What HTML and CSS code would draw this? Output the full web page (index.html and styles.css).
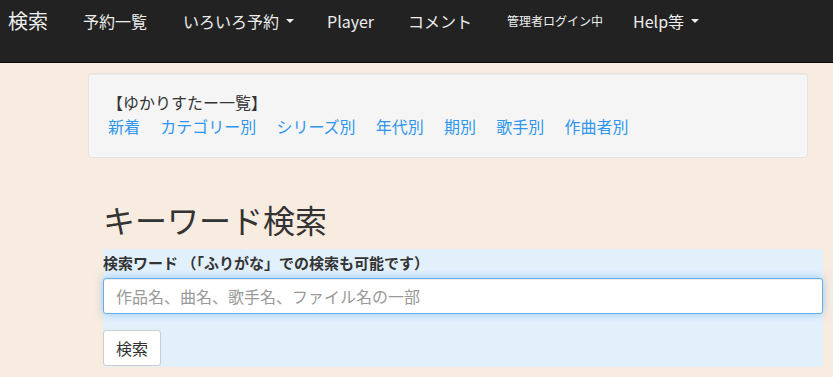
FILE: index.html
```html
<!DOCTYPE html>
<html lang="ja">
<head>
<meta charset="utf-8">
<title>キーワード検索</title>
<link rel="stylesheet" href="styles.css">
</head>
<body>
<header class="navbar">
  <div class="nav-inner">
    <a class="brand" href="#">検索</a>
    <ul class="nav">
      <li><a href="#">予約一覧</a></li>
      <li><a href="#">いろいろ予約<span class="caret"></span></a></li>
      <li><a href="#">Player</a></li>
      <li><a href="#">コメント</a></li>
      <li><a class="small" href="#">管理者ログイン中</a></li>
      <li><a href="#">Help等<span class="caret"></span></a></li>
    </ul>
  </div>
</header>
<main class="main">
  <section class="well">
    <div class="well-title">【ゆかりすたー一覧】</div>
    <div class="well-links">
      <a href="#">新着</a>
      <a href="#">カテゴリー別</a>
      <a href="#">シリーズ別</a>
      <a href="#">年代別</a>
      <a href="#">期別</a>
      <a href="#">歌手別</a>
      <a href="#">作曲者別</a>
    </div>
  </section>
  <h1 class="title">キーワード検索</h1>
  <form class="search-form">
    <label class="label" for="kw">検索ワード （「ふりがな」での検索も可能です）</label>
    <input id="kw" class="input" type="text" placeholder="作品名、曲名、歌手名、ファイル名の一部">
    <div class="actions"><button type="button" class="btn">検索</button></div>
  </form>
</main>
</body>
</html>
```
FILE: styles.css
```css
* { box-sizing: border-box; }
html, body { margin: 0; padding: 0; }
body {
  background: #f8ebe0;
  font-family: "Noto Sans CJK JP", "Noto Sans", sans-serif;
  color: #333;
  font-size: 16px;
  line-height: 24px;
}
a { text-decoration: none; }

.navbar {
  height: 63px;
  background: #222;
  border-bottom: 1px solid #080808;
}
.nav-inner {
  height: 42px;
  display: flex;
  align-items: center;
  padding-left: 8px;
}
.brand {
  color: #eee;
  font-size: 20px;
  line-height: 24px;
}
.nav {
  list-style: none;
  margin: 0 0 0 35px;
  padding: 0;
  display: flex;
  align-items: center;
}
.nav li + li { margin-left: 36px; }
.nav li:nth-child(3) { margin-left: 33px; }
.nav li:nth-child(4) { margin-left: 34px; }
.nav li:nth-child(5) { margin-left: 35px; }
.nav li:nth-child(6) { margin-left: 30px; }
.nav a {
  color: #eee;
  font-size: 16px;
  line-height: 24px;
  display: flex;
  align-items: center;
}
.nav a.small { font-size: 12px; }
.caret {
  display: inline-block;
  width: 0;
  height: 0;
  margin-left: 7px;
  border-top: 4px solid #eee;
  border-left: 4px solid transparent;
  border-right: 4px solid transparent;
}

.main { padding-left: 88px; }
.well {
  width: 720px;
  margin-top: 10px;
  height: 85px;
  padding: 16px 18px 0 19px;
  background: #f5f5f5;
  border: 1px solid #e3e3e3;
  border-radius: 4px;
  box-shadow: inset 0 1px 1px rgba(0,0,0,.05);
}
.well-title { font-size: 16px; line-height: 24px; color: #333; margin-left: -1px; }
.well-links { display: flex; gap: 20.2px; font-size: 16px; line-height: 24px; }
.well-links a { color: #2f95ee; }

.title {
  margin: 43px 0 0 15px;
  font-size: 32px;
  line-height: 36px;
  font-weight: 400;
  color: #333;
}
.search-form {
  margin: 12px 0 0 15px;
  width: 720px;
  background: #e2f0fc;
  padding-top: 4px;
  padding-bottom: 1px;
}
.label {
  display: block;
  font-size: 15px;
  line-height: 20px;
  font-weight: 700;
  color: #333;
}
.input {
  display: block;
  margin-top: 5px;
  width: 720px;
  height: 36px;
  padding: 0 12px;
  font-family: inherit;
  font-size: 16px;
  color: #555;
  background: #fff;
  border: 1px solid #66afe9;
  border-radius: 3px;
  outline: none;
  box-shadow: inset 0 1px 1px rgba(0,0,0,.075), 0 0 8px rgba(102,175,233,.6);
}
.input::placeholder { color: #999; }
.actions { margin-top: 16px; }
.btn {
  height: 36px;
  padding: 0 12px;
  font-family: inherit;
  font-size: 16px;
  color: #333;
  background: #fff;
  border: 1px solid #ccc;
  border-radius: 3px;
}
```
